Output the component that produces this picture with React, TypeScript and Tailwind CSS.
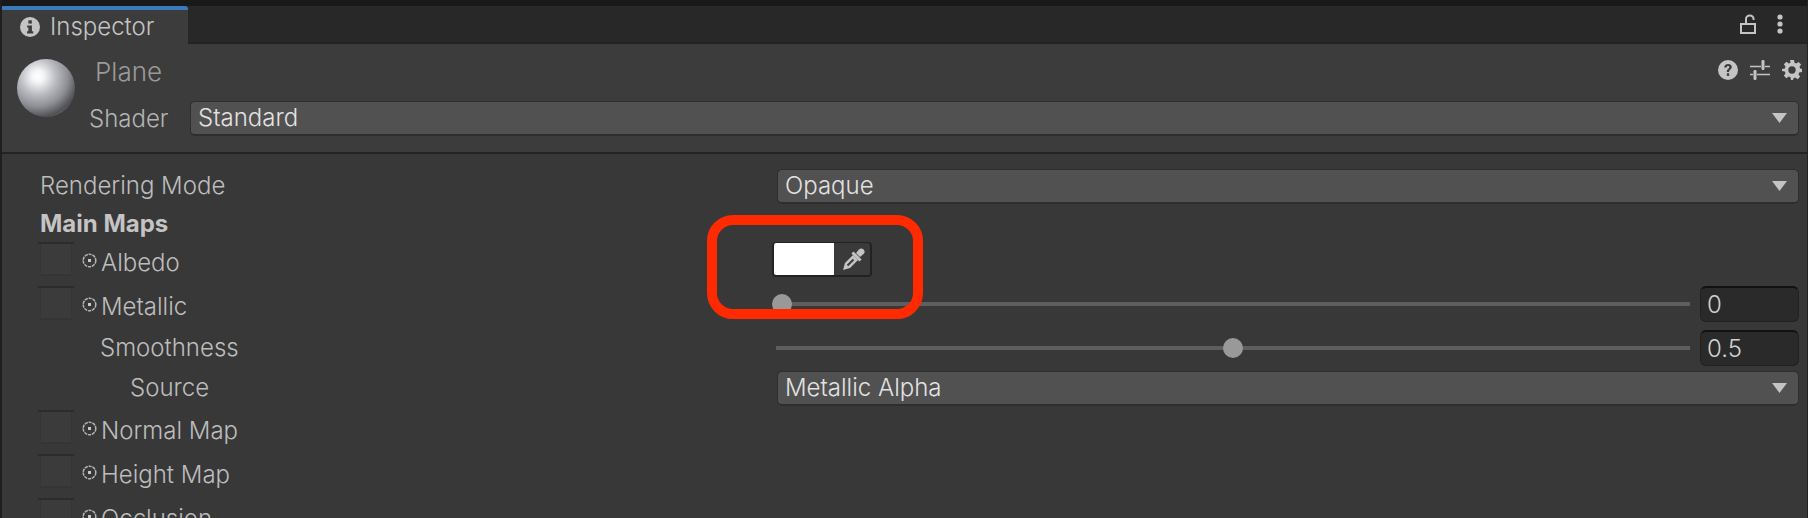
import React from "react";

const Arrow = () => (
  <svg width="15" height="10" viewBox="0 0 15 10" className="block shrink-0"><path d="M0 0h15L7.5 10z" fill="#c4c4c4" /></svg>
);

const Dropdown = ({ label, cls }: { label: string; cls: string }) => (
  <div className={"flex items-center justify-between rounded-[5px] bg-[#515151] border-b-2 border-x border-t border-[#2e2e2e] pl-[7px] pr-[11px] text-[#e2e2e2] " + cls}>
    <span>{label}</span>
    <Arrow />
  </div>
);

const Thumb = () => (
  <div className="w-[36px] h-[36px] shrink-0 border-t-2 border-[#2c2c2c] px-[2px]">
    <div className="h-[32px] bg-[#3b3b3b] border-b-2 border-x border-[#353535] box-border" />
  </div>
);

const Ring = () => (
  <svg width="15" height="15" viewBox="0 0 15 15" className="block shrink-0">
    <circle cx="7.500" cy="7.500" r="6.300" fill="none" stroke="#b4b4b4" strokeWidth="1.500" strokeDasharray="3.200 0.800" />
    <rect x="6" y="6" width="3" height="3" fill="#c8c8c8" />
  </svg>
);

const TexRow = ({ label, cls }: { label: string; cls?: string }) => (
  <div className={"flex items-start h-[44px] pl-[38px] " + (cls ?? "")}>
    <Thumb />
    <div className="flex items-center h-[36px] ml-[8px] gap-[4px]">
      <Ring />
      <span className="translate-y-[3px]">{label}</span>
    </div>
  </div>
);

const Slider = ({ pos, value }: { pos: string; value: string }) => (
  <div className="flex items-center flex-1 h-full">
    <div className="relative flex-1 h-[4px] bg-[#5e5e5e]">
      <div className={"absolute top-[-8px] w-[20px] h-[20px] rounded-full bg-[#999999] " + pos} />
    </div>
    <div className="ml-[10px] w-[99px] h-[36px] rounded-[6px] bg-[#2a2a2a] border border-[#212121] border-t-2 border-t-[#111111] pl-[6px] flex items-center text-[#d2d2d2]">{value}</div>
  </div>
);

export default function App() {
  return (
    <div className="relative w-[1808px] h-[518px] overflow-hidden bg-[#383838] text-[24px] leading-[28px] text-[#bdbdbd] font-light [font-optical-sizing:none]" style={{ fontFamily: "Inter, 'Liberation Sans', sans-serif" }}>
      {/* top strip */}
      <div className="h-[6px] bg-[#191919]" />
      <div className="flex h-[38px] bg-[#282828] border-b-2 border-[#232323] pl-[2px]">
        <div className="w-[186px] h-[38px] bg-[#3c3c3c] border-t-4 border-[#3a79bb] rounded-tr-[3px] flex items-center pl-[18px] gap-[10px] text-[#c4c4c4] relative z-10">
          <svg width="20" height="20" viewBox="0 0 21 21" className="block shrink-0">
            <circle cx="10.500" cy="10.500" r="10.500" fill="#c4c4c4" />
            <rect x="8.800" y="3.500" width="3.600" height="3.400" fill="#3c3c3c" />
            <path d="M7.500 8.800h5v6.200h1.400v2.200H7.400V15h1.400v-4H7.500z" fill="#3c3c3c" />
          </svg>
          <span>Inspector</span>
        </div>
        <div className="flex-1 flex items-center justify-end pr-[25px] gap-[21px]">
          <svg width="16" height="20" viewBox="0 0 16 20" className="block">
            <path d="M6 10V5.200a3.800 3.800 0 0 1 7.600 0V6" fill="none" stroke="#c4c4c4" strokeWidth="2" />
            <rect x="1" y="10" width="14" height="9" fill="none" stroke="#c4c4c4" strokeWidth="2" />
          </svg>
          <svg width="6" height="20" viewBox="0 0 6 20" className="block">
            <circle cx="3" cy="3" r="2.600" fill="#c4c4c4" />
            <circle cx="3" cy="10" r="2.600" fill="#c4c4c4" />
            <circle cx="3" cy="17" r="2.600" fill="#c4c4c4" />
          </svg>
        </div>
      </div>

      {/* header */}
      <div className="relative h-[110px] bg-[#3c3c3c] border-b-2 border-[#232323] flex pl-[2px]">
        <svg width="62" height="62" viewBox="0 0 62 62" className="block shrink-0 ml-[14px] mt-[13px]">
          <defs>
            <radialGradient id="ball" cx="0.36" cy="0.3" r="0.8">
              <stop offset="0" stopColor="#ffffff" />
              <stop offset="0.13" stopColor="#f4f5f7" />
              <stop offset="0.38" stopColor="#bcbec3" />
              <stop offset="0.65" stopColor="#8d8f94" />
              <stop offset="0.88" stopColor="#505155" />
              <stop offset="1" stopColor="#6e6f73" />
            </radialGradient>
          </defs>
          <circle cx="30" cy="31" r="29" fill="url(#ball)" />
        </svg>
        <div className="flex-1 flex flex-col pt-[13px] ml-[11px] pr-[9px]">
          <div className="h-[30px] pl-[6px] text-[#9a9a9a] flex items-center justify-between">
            <span className="text-[26px]">Plane</span>
            <div className="flex items-center gap-[12px] mr-[-3px] mt-[-4px]">
              <svg width="20" height="20" viewBox="0 0 20 20" className="block">
                <circle cx="10" cy="10" r="10" fill="#c4c4c4" />
                <path d="M6.200 7.400c0-2.200 1.700-3.500 3.900-3.500s3.700 1.200 3.700 3.100c0 2.600-2.700 2.600-2.700 4.900H8.800c0-3.200 2.500-3.100 2.500-4.700 0-.8-.5-1.200-1.200-1.200-.8 0-1.300.5-1.400 1.400z" fill="#3c3c3c" />
                <rect x="8.800" y="13.300" width="2.400" height="2.600" fill="#3c3c3c" />
              </svg>
              <svg width="20" height="20" viewBox="0 0 20 20" className="block">
                <path d="M0 6.500h11M15 6.500h5M0 14.500h3M7 14.500h13" stroke="#c4c4c4" strokeWidth="1.600" />
                <rect x="11.500" y="0" width="3" height="10" rx="1.200" fill="#c4c4c4" />
                <rect x="3.500" y="10" width="3" height="10" rx="1.200" fill="#c4c4c4" />
              </svg>
              <svg width="20" height="20" viewBox="0 0 20 20" className="block">
                <path fillRule="evenodd" fill="#c4c4c4" d="M8 0h4l.5 2.800 1.700.7 2.400-1.600 2.500 2.500-1.600 2.400.7 1.700L20 8.900v3.200l-2.800.5-.7 1.700 1.600 2.400-2.500 2.500-2.400-1.600-1.700.7L11 20H9l-.5-2.700-1.700-.7-2.400 1.600-2.500-2.500 1.600-2.400-.7-1.700L0 11.100V8.900l2.800-.5.7-1.700-1.600-2.400 2.500-2.500 2.400 1.600 1.700-.7zM10 6.300a3.700 3.700 0 1 0 0 7.400 3.700 3.700 0 0 0 0-7.400z" />
              </svg>
            </div>
          </div>
          <div className="flex items-center mt-[14px] h-[35px]">
            <span className="w-[101px] shrink-0 text-[#b4b4b4]">Shader</span>
            <Dropdown label="Standard" cls="flex-1 h-[35px]" />
          </div>
        </div>
      </div>

      {/* body */}
      <div className="flex flex-col pt-[15px] pr-[9px] relative">
        <div className="flex items-center h-[35px] mb-[1px]">
          <span className="w-[777px] shrink-0 pl-[40px] -translate-y-[1px]">Rendering Mode</span>
          <Dropdown label="Opaque" cls="flex-1 h-[35px]" />
        </div>
        <div className="h-[36px] pl-[40px] flex items-center font-bold text-[#c4c4c4] mt-[1px]">Main Maps</div>
        <div className="flex items-start h-[44px]">
          <div className="w-[772px] shrink-0"><TexRow label="Albedo" /></div>
          <div className="flex w-[100px] h-[35px] rounded-[4px] border-x-2 border-t border-b-2 border-[#222222] bg-[#3a3a3a] overflow-hidden">
            <div className="w-[60px] bg-white" />
            <div className="flex-1 flex items-center justify-center pl-[4px]">
              <svg width="22" height="22" viewBox="0 0 22 22" className="block">
                <path d="M0 22 2 15l8-8 5 5-8 8z" fill="#c4c4c4" />
                <path d="M4.500 17.500 10.500 11.500" stroke="#3a3a3a" strokeWidth="2" />
                <path d="M9.500 4.500l8 8" stroke="#c4c4c4" strokeWidth="3" />
                <path d="M13 5l3-3.500a2.800 2.800 0 0 1 4.500 4.500L17 9z" fill="#c4c4c4" />
              </svg>
            </div>
          </div>
        </div>
        <div className="flex items-center h-[36px] mb-[8px]">
          <div className="w-[776px] shrink-0"><TexRow label="Metallic" cls="!h-[36px]" /></div>
          <Slider pos="left-[-4px]" value="0" />
        </div>
        <div className="flex items-center h-[36px]">
          <span className="w-[776px] shrink-0 pl-[100px]">Smoothness</span>
          <Slider pos="left-[447px]" value="0.5" />
        </div>
        <div className="flex items-center h-[35px] mt-[5px] mb-[1px]">
          <span className="w-[777px] shrink-0 pl-[130px] -translate-y-[1px]">Source</span>
          <Dropdown label="Metallic Alpha" cls="flex-1 h-[35px]" />
        </div>
        <div className="mt-[3px]">
          <TexRow label="Normal Map" />
          <TexRow label="Height Map" />
          <TexRow label="Occlusion" />
        </div>
      </div>

      {/* red annotation */}
      <div className="absolute left-[707px] top-[215px] w-[216px] h-[104px] rounded-[26px] border-[10px] border-[#ff2a00]" />
      {/* window edges */}
      <div className="absolute right-0 top-0 bottom-0 w-[1px] bg-[#232323]" />
      <div className="absolute left-0 top-0 bottom-0 w-[2px] bg-[#1f1f1f]" />
    </div>
  );
}
